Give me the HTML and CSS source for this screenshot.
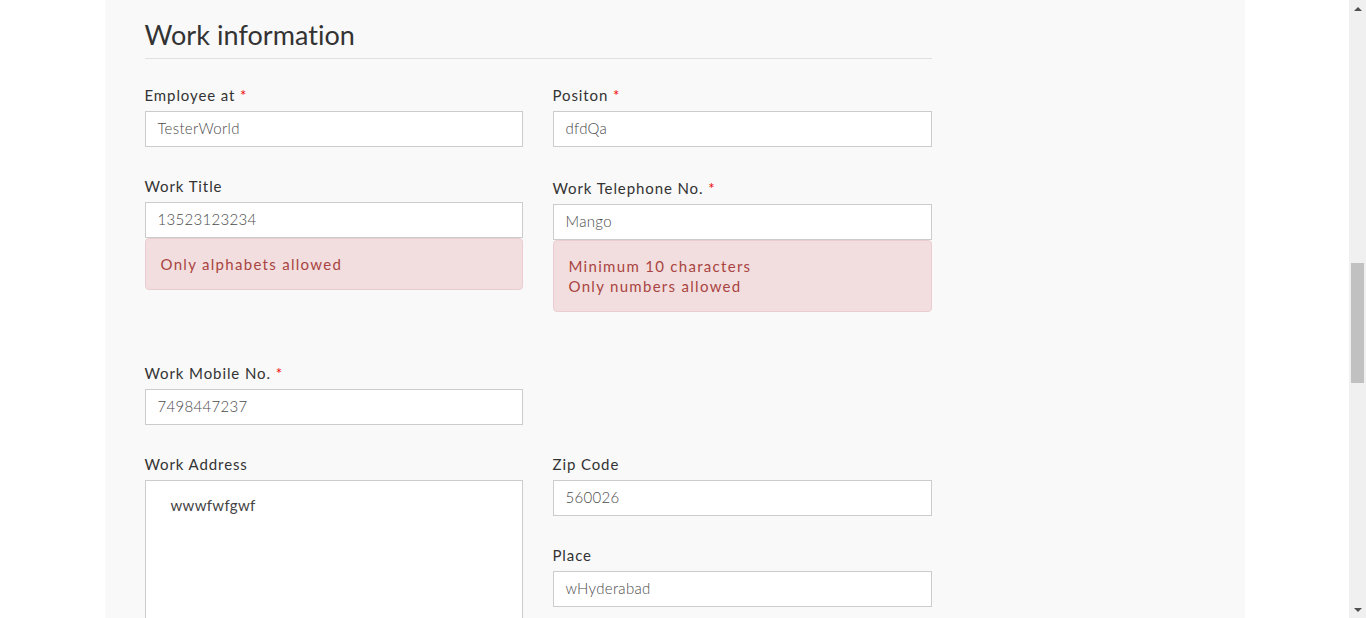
FILE: index.html
```html
<!DOCTYPE html>
<html>
<head>
<meta charset="utf-8">
<link rel="stylesheet" href="styles.css">
</head>
<body>
<div class="viewport">
  <div class="page">
    <div class="panel">
      <h2 class="title">Work information</h2>
      <div class="form">
        <div class="field">
          <div class="label req">Employee at <span class="star">*</span></div>
          <div class="input">TesterWorld</div>
        </div>
        <div class="field">
          <div class="label req">Positon <span class="star">*</span></div>
          <div class="input">dfdQa</div>
        </div>
        <div class="field">
          <div class="label">Work Title</div>
          <div class="input">13523123234</div>
          <div class="alert">Only alphabets allowed</div>
        </div>
        <div class="field">
          <div class="label req">Work Telephone No. <span class="star">*</span></div>
          <div class="input">Mango</div>
          <div class="alert">Minimum 10 characters<br>Only numbers allowed</div>
        </div>
        <div class="field">
          <div class="label req">Work Mobile No. <span class="star">*</span></div>
          <div class="input">7498447237</div>
        </div>
        <div class="field"></div>
        <div class="field address">
          <div class="label">Work Address</div>
          <div class="textarea">wwwfwfgwf</div>
        </div>
        <div class="field stack">
          <div class="field">
            <div class="label">Zip Code</div>
            <div class="input">560026</div>
          </div>
          <div class="field">
            <div class="label">Place</div>
            <div class="input">wHyderabad</div>
          </div>
        </div>
      </div>
    </div>
  </div>
  <div class="scrollbar">
    <div class="arrow up"></div>
    <div class="track"><div class="thumb"></div></div>
    <div class="arrow down"></div>
  </div>
</div>
</body>
</html>
```
FILE: styles.css
```css
html, body {
  margin: 0;
  padding: 0;
  height: 100%;
  overflow: hidden;
  background: #fff;
}
body {
  font-family: "Lato", "Liberation Sans", sans-serif;
  color: #333;
}
.viewport {
  display: flex;
  height: 618px;
}
.page {
  flex: 1;
  display: flex;
  justify-content: center;
  overflow: hidden;
}
.panel {
  width: 1140px;
  background: #f9f9f9;
  padding: 0 40px;
  box-sizing: border-box;
}
.title {
  width: 787px;
  margin: 0;
  padding: 21px 0 10px;
  font-size: 27px;
  font-weight: 400;
  line-height: 27px;
  color: #333;
  letter-spacing: 0.05px;
  border-bottom: 1px solid #e0e0e0;
}
.form {
  width: 787px;
  margin-top: 24px;
  display: grid;
  grid-template-columns: 378px 379px;
  column-gap: 30px;
  align-items: start;
}
.field {
  margin-bottom: 29px;
}
.stack {
  margin-bottom: 0;
}
.label {
  font-size: 15px;
  line-height: 20px;
  margin-bottom: 6px;
  letter-spacing: 0.9px;
  color: #333;
}
.label.req {
  padding-top: 2px;
}
.star {
  color: #e00;
}
.input {
  height: 36px;
  box-sizing: border-box;
  background: #fff;
  border: 1px solid #ccc;
  padding: 0 12px;
  font-size: 15px;
  line-height: 33px;
  color: #4a4a4a;
  letter-spacing: 0.3px;
  font-weight: 300;
}
.alert {
  background: #f2dede;
  border: 1px solid #ebccd1;
  border-radius: 4px;
  color: #a94442;
  font-size: 15px;
  line-height: 20px;
  padding: 15px 15px;
  margin-bottom: 20px;
  letter-spacing: 1.3px;
}
.textarea {
  height: 200px;
  box-sizing: border-box;
  background: #fff;
  border: 1px solid #ccc;
  padding: 15px 25px;
  font-size: 15px;
  line-height: 19px;
  color: #444;
  letter-spacing: 0.3px;
}
.scrollbar {
  width: 17px;
  background: #f0f0f0;
  display: flex;
  flex-direction: column;
}
.arrow {
  height: 17px;
  display: flex;
  align-items: center;
  justify-content: center;
}
.arrow.up::before {
  content: "";
  border-left: 4px solid transparent;
  border-right: 4px solid transparent;
  border-bottom: 4px solid #505050;
}
.arrow.down::before {
  content: "";
  border-left: 4px solid transparent;
  border-right: 4px solid transparent;
  border-top: 4px solid #505050;
}
.track {
  flex: 1;
  padding-top: 246px;
}
.thumb {
  width: 13px;
  margin-left: 2px;
  height: 120px;
  background: #c1c1c1;
}
```
